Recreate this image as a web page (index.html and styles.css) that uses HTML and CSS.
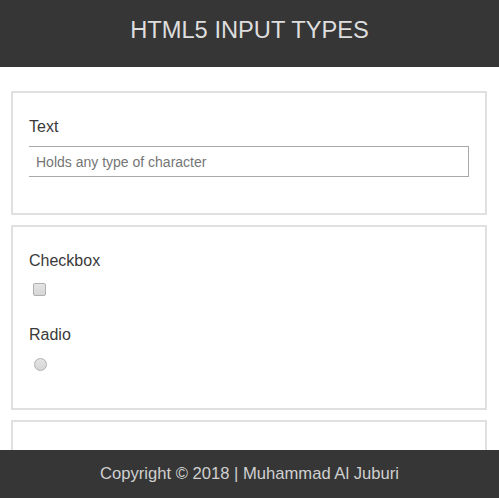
FILE: index.html
```html
<!DOCTYPE html>
<html>
<head>
<meta charset="utf-8">
<title>HTML5 Input Types</title>
<link rel="stylesheet" href="styles.css">
</head>
<body>
<header class="site-header">
  <h1 class="site-title">HTML5 INPUT TYPES</h1>
</header>
<main class="content">
  <section class="card">
    <label class="field-label" for="t1">Text</label>
    <input class="text-input" id="t1" type="text" placeholder="Holds any type of character">
  </section>
  <section class="card card-checks">
    <div class="field">
      <label class="field-label field-label-check" for="c1">Checkbox</label>
      <input class="check" id="c1" type="checkbox">
    </div>
    <div class="field field-next">
      <label class="field-label field-label-radio" for="r1">Radio</label>
      <input class="radio" id="r1" type="radio">
    </div>
  </section>
  <section class="card card-more">
    <input class="text-input" type="email" placeholder="Holds an email address">
  </section>
</main>
<footer class="site-footer">
  <p class="footer-text">Copyright © 2018 | Muhammad Al Juburi</p>
</footer>
</body>
</html>
```
FILE: styles.css
```css
* { box-sizing: border-box; }
html, body { margin: 0; padding: 0; }
body {
  font-family: "Liberation Sans", Arial, sans-serif;
  background: #fff;
  color: #333;
}
.site-header {
  background: #363636;
  height: 67px;
  display: flex;
  align-items: center;
  justify-content: center;
}
.site-title {
  margin: 0 0 7px 0;
  font-size: 23.7px;
  font-weight: normal;
  color: #dedede;
  line-height: 28px;
}
.content {
  padding: 24px 12px 60px 11px;
  display: flex;
  flex-direction: column;
  gap: 10px;
}
.card {
  border: 2px solid #e0e0e0;
  padding: 25px 16px 36px 16px;
  display: flex;
  flex-direction: column;
}
.card-checks { padding-bottom: 37px; }
.card-more { padding-top: 53px; }
.field { display: flex; flex-direction: column; }
.field-next { margin-top: 30px; }
.field-label {
  font-size: 16px;
  line-height: 18px;
  color: #3a3a3a;
  margin-bottom: 10px;
}
.field-label-check { margin-bottom: 13px; }
.field-label-radio { margin-bottom: 14px; }
.text-input {
  height: 31px;
  margin: 0;
  border: 1px solid #a9a9a9;
  border-left: none;
  padding: 0 7px;
  font-family: "Liberation Sans", Arial, sans-serif;
  font-size: 14px;
  color: #333;
  background: #fff;
  outline: none;
}
.text-input::placeholder { color: #757575; }
.check, .radio {
  appearance: none;
  -webkit-appearance: none;
  width: 13px;
  height: 13px;
  margin: 0 0 0 4px;
  background: linear-gradient(#e4e4e4, #d6d6d6);
  border: 1px solid #b0b0b0;
}
.check { border-radius: 2px; }
.radio { border-radius: 50%; margin-left: 5px; }
.site-footer {
  position: fixed;
  left: 0;
  right: 0;
  bottom: 0;
  height: 48px;
  background: #363636;
  display: flex;
  align-items: center;
  justify-content: center;
  z-index: 10;
}
.footer-text {
  margin: 0;
  font-size: 16.6px;
  color: #d0d0d0;
}
```
